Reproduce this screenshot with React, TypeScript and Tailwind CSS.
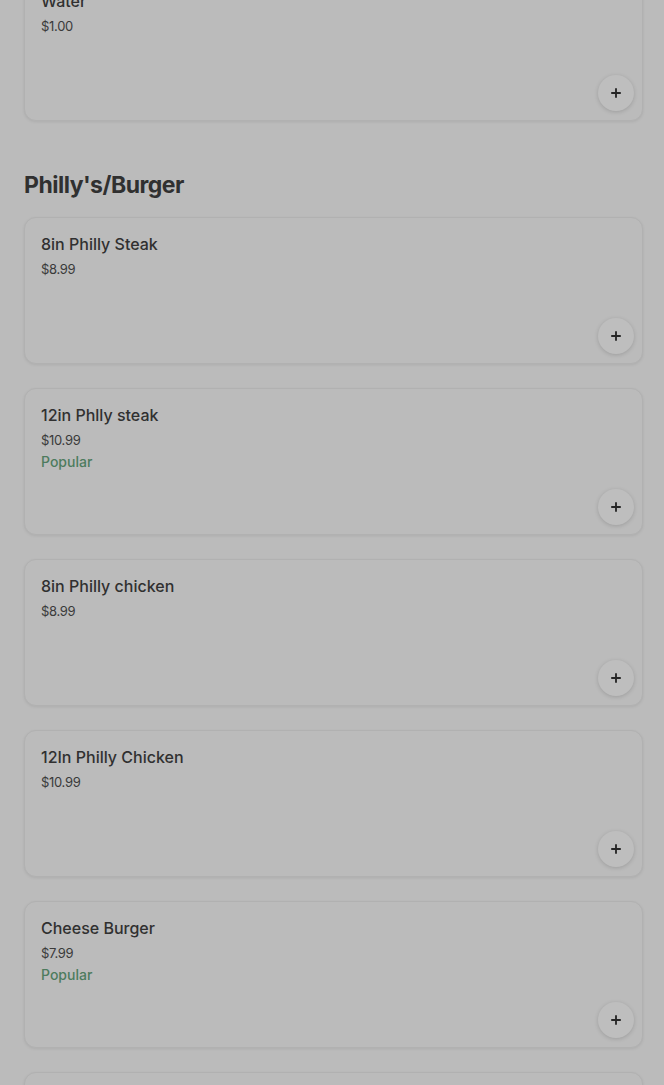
import { Plus } from "lucide-react";

type Item = { name: string; price: string; popular?: boolean };

const philly: Item[] = [
  { name: "8in Philly Steak", price: "$8.99" },
  { name: "12in Phlly steak", price: "$10.99", popular: true },
  { name: "8in Philly chicken", price: "$8.99" },
  { name: "12In Philly Chicken", price: "$10.99" },
  { name: "Cheese Burger", price: "$7.99", popular: true },
  { name: "Bacon Burger", price: "$8.99" },
];

function ItemCard({ item }: { item: Item }) {
  return (
    <div className="h-[147px] rounded-xl border border-[#b1b1b1] bg-[#bbbbbb] shadow-[0_1px_3px_rgba(0,0,0,0.08)] pl-4 pt-[15px] pb-[9px] pr-[8px] flex flex-col">
      <div className="text-[16px] leading-[22px] text-[#303030] font-medium">{item.name}</div>
      <div className="text-[13px] leading-[18px] mt-[5px] text-[#3a3a3a] tracking-[-0.3px]">{item.price}</div>
      {item.popular && (
        <div className="text-[14px] leading-[18px] mt-[4px] text-[#4d7b5e] font-medium">Popular</div>
      )}
      <div className="mt-auto flex justify-end">
        <button className="w-9 h-9 rounded-full bg-[#bebebe] shadow-[0_1px_4px_rgba(0,0,0,0.16)] flex items-center justify-center text-[#262626]">
          <Plus size={14} strokeWidth={3.2} />
        </button>
      </div>
    </div>
  );
}

export default function App() {
  return (
    <div
      className="h-screen bg-[#bbbbbb] overflow-hidden"
      style={{ fontFamily: "Inter, 'Noto Sans', sans-serif" }}
    >
      <div className="pl-6 pr-[21px] mt-[-26px]">
        <ItemCard item={{ name: "Water", price: "$1.00" }} />

        <h2 className="mt-[48px] mb-[16px] text-[23px] leading-[32px] font-bold text-[#303030] tracking-[-0.5px]">
          Philly's/Burger
        </h2>

        <div className="flex flex-col gap-6">
          {philly.map((item) => (
            <ItemCard key={item.name} item={item} />
          ))}
        </div>
      </div>
    </div>
  );
}
